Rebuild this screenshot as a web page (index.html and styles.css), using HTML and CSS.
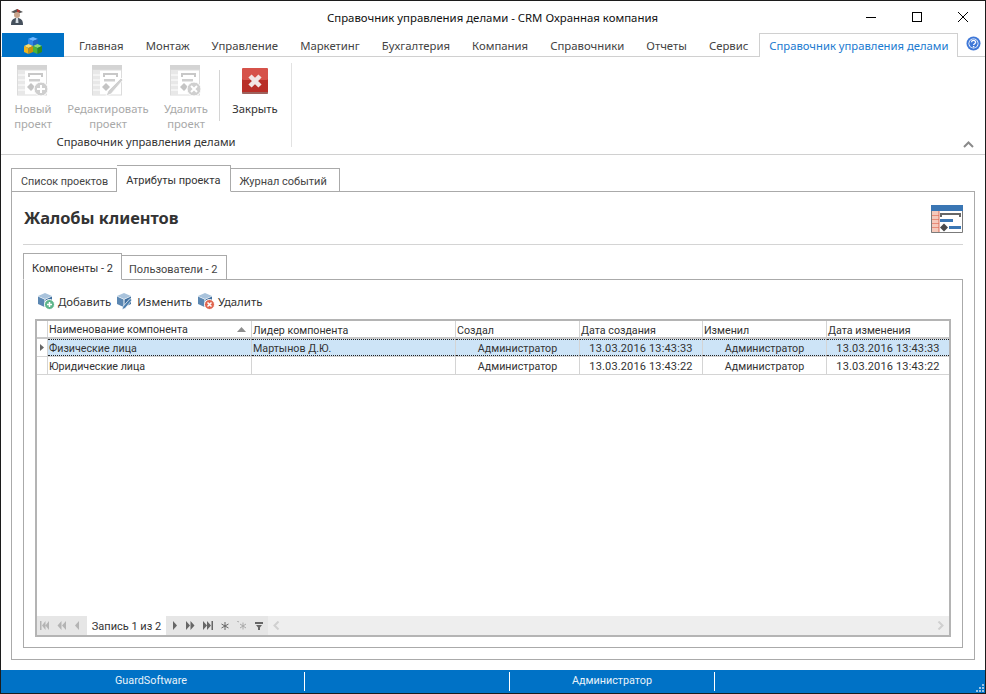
FILE: index.html
```html
<!DOCTYPE html>
<html lang="ru">
<head>
<meta charset="utf-8">
<title>Справочник управления делами - CRM Охранная компания</title>
<link rel="stylesheet" href="styles.css">
</head>
<body>
<svg class="defs" width="0" height="0">
  <defs>
    <g id="proj">
      <rect x="0" y="0" width="30" height="5" fill="#d4d4d4"/>
      <rect x="0.5" y="5" width="29" height="25" fill="#fff" stroke="#dcdcdc"/>
      <rect x="1" y="5" width="7" height="25" fill="#e8e8e8"/>
      <path d="M1 10h7M1 15h7M1 20h7M1 25h7" stroke="#fff"/>
      <path d="M11 8h15v2h-15zM11 10h2v2h-2zM24 10h2v2h-2z" fill="#c8c8c8"/>
      <rect x="12" y="14" width="11" height="2.5" fill="#cfcfcf"/>
      <path d="M14 18l4 4-4 4-4-4z" fill="#c4c4c4"/>
    </g>
    <g id="cube">
      <path d="M7 0l7 3-7 3-7-3z" fill="#a9c3dc"/>
      <path d="M0 3.500l6.500 3v7.500l-6.500-3z" fill="#5b87b2"/>
      <path d="M14 3.500l-6.500 3v7.500l6.500-3z" fill="#3f6f9f"/>
    </g>
  </defs>
</svg>
<div class="window">
  <header class="titlebar">
    <svg class="app-icon" width="16" height="18" viewBox="0 0 16 18">
      <path d="M2 4l6-3 6 3-6 2z" fill="#555"/>
      <path d="M8 1l3 1.500-1 2.500-2-1z" fill="#b3342c"/>
      <circle cx="8" cy="7" r="3" fill="#c9a58c"/>
      <path d="M2 17c0-5 2-7 6-7s6 2 6 7z" fill="#45505c"/>
      <path d="M7 10h2l.5 5h-3z" fill="#d5dde4"/>
    </svg>
    <div class="title">Справочник управления делами - CRM Охранная компания</div>
    <div class="controls">
      <svg width="12" height="12" viewBox="0 0 12 12"><path d="M1 6.500h10" stroke="#000"/></svg>
      <svg width="12" height="12" viewBox="0 0 12 12"><rect x="1.500" y="1.500" width="9" height="9" fill="none" stroke="#000"/></svg>
      <svg width="12" height="12" viewBox="0 0 12 12"><path d="M1 1l10 10M11 1l-10 10" stroke="#000"/></svg>
    </div>
  </header>

  <nav class="tabsbar">
    <div class="file-btn">
      <svg width="18" height="17" viewBox="0 0 18 17">
        <path d="M9 0l5 2-5 2-5-2z" fill="#6fb8ff"/>
        <path d="M4 2l5 2v5l-5-2z" fill="#2f86e6"/>
        <path d="M14 2l-5 2v5l5-2z" fill="#1f66c0"/>
        <path d="M4.500 7l4.500 2-4.500 2-4.500-2z" fill="#ffdc6a"/>
        <path d="M0 9l4.500 2v6l-4.500-2z" fill="#f1b51c"/>
        <path d="M9 9l-4.500 2v6l4.500-2z" fill="#c98e0c"/>
        <path d="M13.500 7l4.500 2-4.500 2-4.500-2z" fill="#8fdc70"/>
        <path d="M9 9l4.500 2v6l-4.500-2z" fill="#4cb536"/>
        <path d="M18 9l-4.500 2v6l4.500-2z" fill="#2c8a20"/>
      </svg>
    </div>
    <div class="tab">Главная</div>
    <div class="tab">Монтаж</div>
    <div class="tab">Управление</div>
    <div class="tab">Маркетинг</div>
    <div class="tab">Бухгалтерия</div>
    <div class="tab">Компания</div>
    <div class="tab">Справочники</div>
    <div class="tab">Отчеты</div>
    <div class="tab">Сервис</div>
    <div class="tab tab-active">Справочник управления делами</div>
    <svg class="help" width="15" height="15" viewBox="0 0 15 15">
      <circle cx="7.500" cy="7.500" r="7" fill="#3f78d8"/>
      <circle cx="7.500" cy="7.500" r="5" fill="#fff"/>
      <circle cx="7.500" cy="7.500" r="4.200" fill="#3f78d8"/>
      <path d="M5.500 6.200c.2-2.400 4.200-2.300 4.100 0 0 1.500-2 1.500-2 2.800" fill="none" stroke="#fff" stroke-width="1.300"/>
      <rect x="6.900" y="10" width="1.400" height="1.400" fill="#fff"/>
    </svg>
  </nav>

  <section class="ribbon">
    <div class="group">
      <div class="group-items">
        <div class="rb rb-1 rb-off">
          <svg class="rb-icon" width="32" height="32" viewBox="0 0 32 32">
            <use href="#proj"/>
            <circle cx="24" cy="24" r="7" fill="#cfcfcf" stroke="#fff"/>
            <path d="M24 20v8M20 24h8" stroke="#fff" stroke-width="2"/>
          </svg>
          <span>Новый<br>проект</span>
        </div>
        <div class="rb rb-2 rb-off">
          <svg class="rb-icon" width="32" height="32" viewBox="0 0 32 32">
            <use href="#proj"/>
            <path d="M31 15l-2-2-13 13-2 5 5-2z" fill="#d0d0d0" stroke="#fff" stroke-width=".8"/>
          </svg>
          <span>Редактировать<br>проект</span>
        </div>
        <div class="rb rb-3 rb-off">
          <svg class="rb-icon" width="32" height="32" viewBox="0 0 32 32">
            <use href="#proj"/>
            <circle cx="24" cy="24" r="7" fill="#cfcfcf" stroke="#fff"/>
            <path d="M21 21l6 6M27 21l-6 6" stroke="#fff" stroke-width="2"/>
          </svg>
          <span>Удалить<br>проект</span>
        </div>
        <div class="rb-sep"></div>
        <div class="rb rb-4">
          <svg class="rb-close" width="26" height="26" viewBox="0 0 26 26">
            <rect width="26" height="26" rx="1.500" fill="#b92f28"/>
            <rect width="26" height="12" rx="1.500" fill="#d6524a"/>
            <rect x="0" y="24" width="26" height="2" fill="#8d8580" opacity=".6"/>
            <path d="M8 8l10 10M18 8l-10 10" stroke="#f2e6e4" stroke-width="4.500"/>
          </svg>
          <span>Закрыть</span>
        </div>
      </div>
      <div class="group-label">Справочник управления делами</div>
    </div>
    <svg class="collapse" width="11" height="7" viewBox="0 0 11 7"><path d="M1 6l4.500-4.500 4.500 4.500" fill="none" stroke="#8a8a8a" stroke-width="2"/></svg>
  </section>

  <main class="content">
    <div class="pg-tabs">
      <div class="pg-tab">Список проектов</div>
      <div class="pg-tab pg-tab-active">Атрибуты проекта</div>
      <div class="pg-tab">Журнал событий</div>
    </div>
    <div class="pg-panel">
      <div class="heading">
        <h1>Жалобы клиентов</h1>
        <svg width="32" height="28" viewBox="0 0 32 28">
          <rect width="32" height="28" fill="#fff"/>
          <rect width="32" height="6" fill="#3a76b4"/>
          <rect x="0" y="6" width="8" height="22" fill="#f5c9bb"/>
          <path d="M0 10.500h8M0 14.500h8M0 18.500h8M0 22.500h8" stroke="#e88c78"/>
          <path d="M8 6v22" stroke="#d86c58"/>
          <path d="M.5 6v21.500h31V6" fill="none" stroke="#7b7b7b"/>
          <path d="M9 8h21v2h-21zM9 10h2v2h-2zM28 10h2v2h-2z" fill="#666"/>
          <rect x="9" y="14" width="13" height="3" fill="#3a76b4"/>
          <path d="M13 18.500l4 4-4 4-4-4z" fill="#4a4a4a"/>
          <rect x="18" y="21" width="12" height="3" fill="#3a76b4"/>
        </svg>
      </div>
      <div class="sub-tabs">
        <div class="sub-tab sub-tab-active">Компоненты - 2</div>
        <div class="sub-tab">Пользователи - 2</div>
      </div>
      <div class="sub-panel">
        <div class="toolbar">
          <div class="tool">
            <svg width="17" height="17" viewBox="0 0 17 17"><use href="#cube"/><circle cx="11.500" cy="11.500" r="5" fill="#5eb58a" stroke="#fff"/><path d="M11.500 9v5M9 11.500h5" stroke="#fff" stroke-width="1.500"/></svg>
            <span>Добавить</span>
          </div>
          <div class="tool">
            <svg width="17" height="17" viewBox="0 0 17 17"><use href="#cube"/><path d="M15 7l-2-1.500-7 8-1 3 3-1z" fill="#4c7faf" stroke="#fff" stroke-width=".7"/></svg>
            <span>Изменить</span>
          </div>
          <div class="tool">
            <svg width="17" height="17" viewBox="0 0 17 17"><use href="#cube"/><circle cx="11.500" cy="11.500" r="5" fill="#e0654e" stroke="#fff"/><path d="M9.500 9.500l4 4M13.500 9.500l-4 4" stroke="#fff" stroke-width="1.500"/></svg>
            <span>Удалить</span>
          </div>
        </div>
        <div class="grid">
          <div class="grid-head row">
            <div class="ind"></div>
            <div class="cell sort">Наименование компонента<svg width="9" height="5" viewBox="0 0 9 5"><path d="M4.500 0l4.500 5h-9z" fill="#8e8e8e"/></svg></div>
            <div class="cell">Лидер компонента</div>
            <div class="cell">Создал</div>
            <div class="cell">Дата создания</div>
            <div class="cell">Изменил</div>
            <div class="cell">Дата изменения</div>
          </div>
          <div class="row row-sel">
            <div class="ind"><svg width="4" height="7" viewBox="0 0 4 7"><path d="M0 0l4 3.500-4 3.500z" fill="#666"/></svg></div>
            <div class="cell">Физические лица</div>
            <div class="cell">Мартынов Д.Ю.</div>
            <div class="cell center">Администратор</div>
            <div class="cell center num">13.03.2016 13:43:33</div>
            <div class="cell center">Администратор</div>
            <div class="cell center num">13.03.2016 13:43:33</div>
          </div>
          <div class="row">
            <div class="ind"></div>
            <div class="cell">Юридические лица</div>
            <div class="cell"></div>
            <div class="cell center">Администратор</div>
            <div class="cell center num">13.03.2016 13:43:22</div>
            <div class="cell center">Администратор</div>
            <div class="cell center num">13.03.2016 13:43:22</div>
          </div>
          <div class="grid-empty"></div>
          <div class="pager">
            <div class="pager-btns pager-left">
              <svg width="9" height="9" viewBox="0 0 9 9"><path d="M0 0h1.500v9h-1.500zM5.500 0v9l-3.500-4.500zM9 0v9l-3.500-4.500z" fill="#b4b4b4"/></svg>
              <svg width="9" height="9" viewBox="0 0 9 9"><path d="M4.500 0v9l-4-4.500zM9 0v9l-4-4.500z" fill="#b4b4b4"/></svg>
              <svg width="6" height="9" viewBox="0 0 6 9"><path d="M5 0v9l-4-4.500z" fill="#b4b4b4"/></svg>
            </div>
            <div class="pager-text">Запись 1 из 2</div>
            <div class="pager-btns pager-right">
              <svg width="6" height="9" viewBox="0 0 6 9"><path d="M1 0v9l4-4.500z" fill="#666"/></svg>
              <svg width="9" height="9" viewBox="0 0 9 9"><path d="M0 0v9l4-4.500zM4.500 0v9l4-4.500z" fill="#666"/></svg>
              <svg width="10" height="9" viewBox="0 0 10 9"><path d="M0 0v9l4-4.500zM4 0v9l4-4.500zM8.500 0h1.500v9h-1.500z" fill="#666"/></svg>
              <svg width="8" height="8" viewBox="0 0 8 8"><path d="M4 0v8M.5 2l7 4M7.500 2l-7 4" stroke="#666"/></svg>
              <svg width="10" height="9" viewBox="0 0 10 9"><path d="M6 1.500v7M3 3l6 4M9 3l-6 4" stroke="#aaa"/><path d="M0 0l2 1" stroke="#aaa"/></svg>
              <svg width="8" height="8" viewBox="0 0 8 8"><path d="M0 0h8v2h-8zM1 3h6l-2 2.500v2.500h-2v-2.500z" fill="#666"/></svg>
            </div>
            <div class="hscroll">
              <svg width="7" height="9" viewBox="0 0 7 9"><path d="M5.500 .5l-4 4 4 4" fill="none" stroke="#d0d0d0" stroke-width="2"/></svg>
              <svg width="7" height="9" viewBox="0 0 7 9"><path d="M1.500 .5l4 4-4 4" fill="none" stroke="#d0d0d0" stroke-width="2"/></svg>
            </div>
          </div>
        </div>
      </div>
    </div>
  </main>

  <footer class="status">
    <div class="st-cell st-first">GuardSoftware</div>
    <div class="st-cell"></div>
    <div class="st-cell">Администратор</div>
    <div class="st-rest"></div>
    <svg class="grip" width="8" height="8" viewBox="0 0 8 8"><path d="M6 0h2v2h-2zM3 3h2v2h-2zM6 3h2v2h-2zM0 6h2v2h-2zM3 6h2v2h-2zM6 6h2v2h-2z" fill="#9cc3e6"/></svg>
  </footer>
</div>
</body>
</html>
```

FILE: styles.css
```css
* { box-sizing: border-box; }
html, body { margin: 0; padding: 0; }
body {
  width: 986px;
  height: 694px;
  overflow: hidden;
  font-family: "Noto Sans", "Liberation Sans", sans-serif;
  font-size: 11.25px;
  color: #333;
  background: #fff;
}
.defs { position: absolute; }
.window {
  width: 986px;
  height: 694px;
  border: 1px solid #1c1c1c;
  display: flex;
  flex-direction: column;
  background: #fff;
}

/* title bar */
.titlebar {
  height: 32px;
  flex: none;
  display: flex;
  align-items: center;
  padding-left: 8px;
}
.app-icon { flex: none; }
.title {
  flex: 1;
  text-align: center;
  color: #111;
  font-size: 11.4px;
  padding-left: 95px;
}
.controls {
  display: flex;
  flex: none;
  gap: 34px;
  width: 120px;
}
.controls svg { display: block; }

/* ribbon tabs */
.tabsbar {
  height: 24px;
  flex: none;
  display: flex;
  align-items: stretch;
  border-bottom: 1px solid #d0d0d0;
}
.file-btn {
  flex: none;
  width: 62px;
  height: 24px;
  margin-left: 1px;
  margin-right: 4px;
  background: #0072c6;
  display: flex;
  align-items: center;
  justify-content: center;
}
.tab {
  flex: none;
  padding: 0 11px;
  font-size: 11.35px;
  line-height: 25px;
  white-space: nowrap;
  color: #444;
}
.tab-active {
  height: 24px;
  font-size: 11.25px;
  color: #1a7ad0;
  background: #fff;
  border: 1px solid #d0d0d0;
  border-bottom: 0;
  line-height: 24px;
  padding: 0 9px;
}
.help { flex: none; margin: 3px 0 0 8px; }

/* ribbon */
.ribbon {
  height: 98px;
  flex: none;
  position: relative;
  border-bottom: 1px solid #d0d0d0;
  padding: 6px 0 0 9px;
}
.group {
  width: 282px;
  height: 84px;
  border-right: 1px solid #e2e2e2;
  display: flex;
  flex-direction: column;
}
.group-items { display: flex; height: 73px; }
.rb {
  display: flex;
  flex-direction: column;
  align-items: center;
  text-align: center;
  line-height: 15px;
  color: #333;
}
.rb-off { color: #a9a9a9; }
.rb-icon { margin: 2px 0 4px; }
.rb-close { margin: 5px 0 7px; }
.rb-1 { width: 46px; }
.rb-2 { width: 88px; margin-left: 8px; }
.rb-3 { width: 52px; margin-left: 8px; }
.rb-4 { width: 58px; margin-left: 6px; }
.rb-sep {
  width: 1px;
  height: 51px;
  margin: 7px 0 0 7px;
  background: #d4d4d4;
}
.group-label {
  text-align: center;
  line-height: 14px;
  padding-top: 4px;
  width: 272px;
}
.collapse { position: absolute; right: 11px; top: 84px; }

/* content */
.content {
  flex: 1;
  min-height: 0;
  padding: 10px;
  display: flex;
  flex-direction: column;
}
.pg-tabs {
  display: flex;
  height: 27px;
  flex: none;
  align-items: flex-end;
  position: relative;
  z-index: 1;
}
.pg-tab {
  height: 24px;
  line-height: 25px;
  padding: 0 9px;
  border: 1px solid #aaa;
  border-left: 0;
  color: #444;
  font-family: Roboto, "Noto Sans", sans-serif;
  font-size: 11px;
}
.pg-tab:first-child {
  border-left: 1px solid #aaa;
  padding-right: 8px;
  font-size: 10.8px;
}
.pg-tab:last-child { padding: 0 12px 0 8px; }
.pg-tab-active {
  height: 27px;
  padding: 0 10px 0 9px;
  border-bottom-color: #fff;
  line-height: 29px;
  color: #333;
}
.pg-panel {
  flex: 1;
  min-height: 0;
  margin-top: -1px;
  border: 1px solid #aaa;
  padding: 0 11px 11px;
  display: flex;
  flex-direction: column;
}
.heading {
  height: 53px;
  flex: none;
  border-bottom: 1px solid #d4d4d4;
  display: flex;
  align-items: flex-start;
  justify-content: space-between;
}
.heading h1 {
  margin: 16px 0 0 1px;
  font-size: 16.4px;
  line-height: 20px;
  color: #333;
  font-weight: 700;
}
.heading svg { margin-top: 13px; }
.sub-tabs {
  display: flex;
  margin-top: 8px;
  height: 27px;
  flex: none;
  align-items: flex-end;
  position: relative;
  z-index: 1;
}
.sub-tab {
  height: 25px;
  line-height: 27px;
  padding: 0 7px 0 7px;
  border: 1px solid #aaa;
  border-left: 0;
  color: #444;
  font-family: Roboto, "Noto Sans", sans-serif;
  font-size: 11px;
}
.sub-tab:last-child { padding-right: 8px; }
.sub-tab-active {
  height: 27px;
  line-height: 30px;
  padding: 0 8px;
  border-left: 1px solid #aaa;
  border-bottom-color: #fff;
  color: #333;
}
.sub-panel {
  flex: 1;
  min-height: 0;
  margin-top: -1px;
  border: 1px solid #aaa;
  padding: 0 11px 10px;
  display: flex;
  flex-direction: column;
}
.toolbar {
  height: 39px;
  flex: none;
  display: flex;
  align-items: center;
  gap: 6px;
  padding: 4px 0 0 3px;
  font-size: 11.4px;
}
.tool { display: flex; align-items: center; gap: 3px; }
.tool svg { display: block; }

/* grid */
.grid {
  flex: 1;
  min-height: 0;
  border: 2px solid #b4b4b4;
  display: flex;
  flex-direction: column;
  background: #fff;
  font-family: Roboto, "Noto Sans", sans-serif;
  font-size: 10.7px;
}
.row {
  height: 18px;
  flex: none;
  display: grid;
  grid-template-columns: 11px 204px 204px 124px 123px 124px 1fr;
  border-bottom: 1px solid #d4d4d4;
  line-height: 17px;
}
.grid-head { border-bottom: 2px solid #c8c8c8; }
.ind {
  border-right: 1px solid #d4d4d4;
  display: flex;
  align-items: center;
  justify-content: center;
}
.cell {
  padding: 1px 1px 0;
  border-right: 1px solid #d4d4d4;
  white-space: nowrap;
  overflow: hidden;
}
.cell:last-child { border-right: 0; }
.center { text-align: center; }
.num { font-size: 11px; letter-spacing: .15px; }
.sort {
  display: flex;
  align-items: center;
  justify-content: space-between;
  padding-right: 5px;
}
.row-sel .cell {
  background: #cde4f7;
  border-top: 1px dotted #222;
  border-bottom: 1px dotted #222;
  line-height: 15px;
}
.grid-empty { flex: 1; min-height: 0; }
.pager {
  height: 19px;
  flex: none;
  display: flex;
  align-items: center;
  background: #eeeeee;
}
.pager-btns {
  display: flex;
  align-items: center;
  height: 19px;
  background: #e6e6e6;
}
.pager-left { width: 50px; gap: 8px; padding-left: 3px; }
.pager-right { width: 102px; gap: 8px; padding-left: 6px; }
.pager-text {
  width: 79px;
  height: 19px;
  line-height: 21px;
  text-align: center;
  background: #fff;
  font-size: 11px;
}
.hscroll {
  flex: 1;
  display: flex;
  justify-content: space-between;
  padding: 0 5px;
}

/* status */
.status {
  height: 23px;
  flex: none;
  background: #0072c6;
  color: #e8f2fa;
  display: flex;
  align-items: center;
  position: relative;
  font-family: Roboto, "Noto Sans", sans-serif;
  font-size: 10.8px;
}
.st-cell {
  width: 205px;
  height: 19px;
  line-height: 18px;
  text-align: center;
  border-right: 1px solid #fff;
}
.st-first { width: 304px; padding-right: 3px; }
.st-rest { flex: 1; }
.grip { position: absolute; right: 1px; bottom: 1px; }
```
